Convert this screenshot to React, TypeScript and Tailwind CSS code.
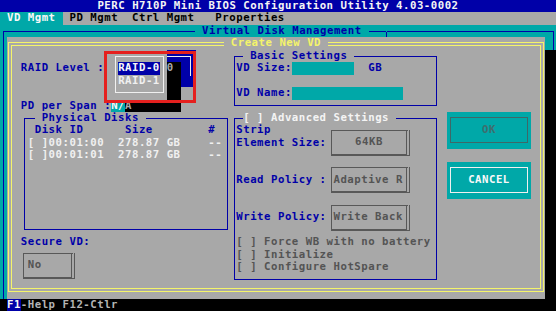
import React from 'react';

// PERC BIOS "Create New VD" screen, 80x25 text mode scaled to 556x311 (cell 6.95 x 12.44)

const Field: React.FC<{ children: React.ReactNode; center?: boolean; className?: string }> = ({ children, center, className }) => (
  <div
    className={`w-[79px] h-[26px] border border-double border-r-4 border-b-2 border-[#585858] flex items-center text-[#545454] ${
      center ? 'justify-center' : 'pl-[1.5px]'
    } ${className ?? ''}`}
  >
    {children}
  </div>
);

export default function App() {
  return (
    <div className="relative w-[556px] h-[311px] overflow-hidden bg-black whitespace-pre font-['DejaVu_Sans_Mono','Liberation_Mono',monospace] text-[10.68px] tracking-[0.52px] leading-[12.44px] font-bold">
      {/* Title bar */}
      <div className="h-[12.44px] bg-[#0000a8] text-[#f4f4f4] flex justify-center">
        PERC H710P Mini BIOS Configuration Utility 4.03-0002
      </div>

      {/* Menu bar */}
      <div className="h-[12.44px] bg-[#a8a8a8] text-black flex">
        <div className="w-[62.55px] bg-[#00a8a8] text-[#f8f8f8] pl-[6.95px]">VD Mgmt</div>
        <div className="ml-[6.95px]">PD Mgmt</div>
        <div className="ml-[13.9px]">Ctrl Mgmt</div>
        <div className="ml-[20.85px]">Properties</div>
      </div>

      {/* Virtual Disk Management window */}
      <div className="h-[273.68px] flex flex-col bg-[#00a8a8]">
        <div className="h-[12.44px] flex items-center pl-[3px]">
          <div className="w-px h-[6.22px] self-end bg-[#0000a8]" />
          <div className="w-[191px] h-px bg-[#0000a8]" />
          <div className="px-[6.95px] text-[#0000a8]">Virtual Disk Management</div>
          <div className="w-[17px] h-px bg-[#0000a8]" />
          <div className="w-px h-[5px] self-end bg-[#0000a8]" />
          <div className="flex-1 h-px bg-[#0000a8]" />
          <div className="w-px h-[6.22px] self-end bg-[#0000a8]" />
          <div className="w-[2px]" />
        </div>

        <div className="flex flex-1">
          <div className="w-[6.95px] pl-[3px] flex">
            <div className="w-px bg-[#0000a8]" />
          </div>

          {/* Create New VD dialog */}
          <div className="w-[538px] bg-[#a8a8a8] pt-[5px] pb-[6.5px] px-[1px] flex flex-col">
            <div className="flex-1 border-4 border-double border-[#f4f46a] flex flex-col">
              <div className="-mt-[9px] flex justify-center">
                <span className="bg-[#a8a8a8] px-[6.95px] text-[#f4f46a]">Create New VD</span>
              </div>

              <div className="flex items-start pl-[8.9px]">
                {/* Left column */}
                <div className="w-[207.15px] flex flex-col">
                  <div className="mt-[12.44px] text-[#0000a8]">RAID Level :</div>
                  <div className="mt-[24.88px] text-[#0000a8]">
                    PD per Span :<span className="bg-[#00a8a8] text-[#f8f8f8]">N/</span>
                    <span className="bg-black text-[#a8a8a8]">A</span>
                  </div>

                  <div className="mt-[6.22px] ml-[3.15px] w-[204px] h-[112px] border border-[#0000a8] flex flex-col">
                    <div className="-mt-[7.22px] ml-[9.75px] self-start bg-[#a8a8a8] text-[#0000a8]"> Physical Disks </div>
                    <div className="pl-[2.8px] text-[#0000a8]"> Disk ID      Size        #</div>
                    <div className="pl-[2.8px] text-[#f0f0f0]">[ ]00:01:00  278.87 GB    --</div>
                    <div className="pl-[2.8px] text-[#f0f0f0]">[ ]00:01:01  278.87 GB    --</div>
                  </div>

                  <div className="mt-[6.18px] text-[#0000a8]">Secure VD:</div>
                  <div className="mt-[4.2px] ml-[2.15px] w-[52px] h-[26px] border border-double border-r-4 border-b-2 border-[#585858] flex items-center pl-[3.8px] text-[#545454]">
                    No
                  </div>
                </div>

                {/* Middle column */}
                <div className="ml-[6px] w-[203px] flex flex-col">
                  <div className="mt-[6.22px] h-[50px] border border-[#0000a8] flex flex-col">
                    <div className="-mt-[7.22px] ml-[8.25px] self-start bg-[#a8a8a8] text-[#0000a8]"> Basic Settings </div>
                    <div className="flex pl-[1.3px] text-[#0000a8]">
                      VD Size:<div className="w-[62.55px] bg-[#00a8a8]" />
                      <div className="ml-[13.9px]">GB</div>
                    </div>
                    <div className="mt-[12.44px] flex pl-[1.3px] text-[#0000a8]">
                      VD Name:<div className="w-[111.2px] bg-[#00a8a8]" />
                    </div>
                  </div>

                  <div className="mt-[12.2px] h-[161.7px] border border-[#0000a8] flex flex-col">
                    <div className="-mt-[7.22px] ml-[8.25px] self-start bg-[#a8a8a8] text-[#f4f4f4]">[ ] Advanced Settings </div>
                    <div className="pl-[1.3px] flex flex-col">
                      <div className="flex items-start">
                        <div className="text-[#0000a8]">
                          <div>Strip</div>
                          <div>Element Size:</div>
                        </div>
                        <Field center className="ml-[4.4px] mt-[5.6px]">64KB</Field>
                      </div>
                      <div className="mt-[11.4px] flex items-center">
                        <div className="text-[#0000a8]">Read Policy :</div>
                        <Field className="ml-[4.4px]">Adaptive R</Field>
                      </div>
                      <div className="mt-[11.3px] flex items-center">
                        <div className="text-[#0000a8]">Write Policy:</div>
                        <Field className="ml-[4.4px]">Write Back</Field>
                      </div>
                      <div className="mt-[5.66px] text-[#545454]">
                        <div>[ ] Force WB with no battery</div>
                        <div>[ ] Initialize</div>
                        <div>[ ] Configure HotSpare</div>
                      </div>
                    </div>
                  </div>
                </div>

                {/* Buttons */}
                <div className="ml-[10px] w-[84px] flex flex-col">
                  <div className="mt-[62.2px] h-[37.32px] bg-[#00a8a8] px-[3px] pt-[5.3px] pb-[6px] flex">
                    <div className="flex-1 border border-[#3e6868] flex items-center justify-center text-[#3e6e6e]">OK</div>
                  </div>
                  <div className="mt-[12.44px] h-[37.32px] bg-[#00a8a8] px-[3px] pt-[5.3px] pb-[6px] flex">
                    <div className="flex-1 border border-[#f0f0f0] flex items-center justify-center text-[#f8f8f8]">CANCEL</div>
                  </div>
                </div>
              </div>
            </div>
          </div>

          {/* Dialog shadow */}
          <div className="flex-1 flex flex-col">
            <div className="h-[12.7px] flex">
              <div className="w-[8px]" />
              <div className="w-px bg-[#0000a8]" />
            </div>
            <div className="flex-1 bg-black" />
          </div>
        </div>
      </div>

      {/* Status bar */}
      <div className="h-[12.44px] bg-black flex">
        <span className="ml-[6.95px] bg-[#0000a8] text-[#f8f8f8]">F1</span>
        <span className="text-[#b4b4b4]">-Help F12-Ctlr</span>
      </div>

      {/* RAID level field, open under its drop-down list */}
      <div className="absolute left-[166.8px] top-[49.76px] w-[29px] h-[37.34px] bg-[#0000a8]">
        <div className="mt-[6px] w-[24px] h-[20px] border-t border-r border-[#f0f0f0]" />
      </div>
      <div className="absolute left-[166.8px] top-[62.2px] w-[13.9px] h-[49.76px] bg-black text-[#a8a8a8]">0</div>
      <div className="absolute left-[132.05px] top-[99.52px] w-[34.75px] h-[12.44px] bg-black" />

      <div className="absolute left-[111.2px] top-[49.76px] w-[55.6px] h-[49.76px] bg-[#a8a8a8] pl-[3.4px] pt-[6.22px]">
        <div className="w-[49px] h-[37.32px] border border-[#f0f0f0] pl-[2.55px] pt-[5.22px]">
          <div className="w-[41.7px] bg-[#0000a8] text-[#f8f8f8]">RAID-0</div>
          <div className="text-[#f0f0f0]">RAID-1</div>
        </div>
      </div>

      {/* Red highlight mark */}
      <div className="absolute left-[104px] top-[51px] w-[92px] h-[52px] border-[3px] border-[#e5201e]" />
    </div>
  );
}
